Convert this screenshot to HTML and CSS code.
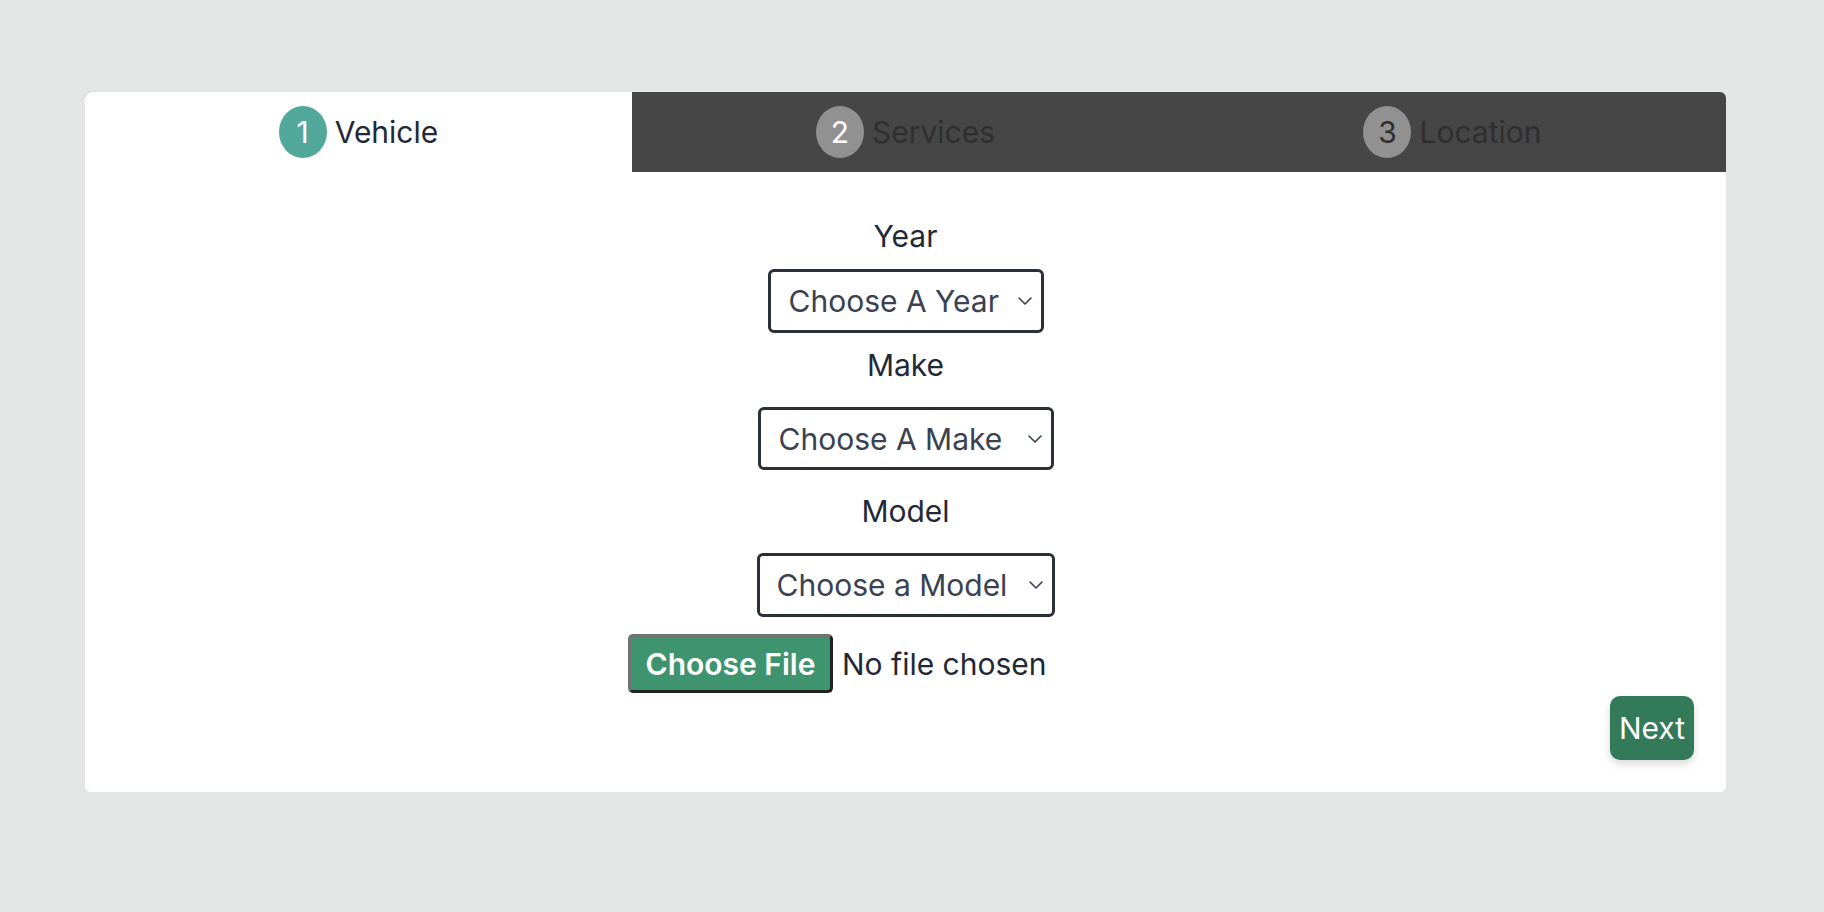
FILE: index.html
```html
<!DOCTYPE html>
<html lang="en">
<head>
<meta charset="utf-8">
<title>Vehicle</title>
<link rel="stylesheet" href="styles.css">
</head>
<body>
<div class="card">
  <div class="tabs">
    <div class="tab tab-active"><span class="badge badge-active">1</span><span class="tab-label">Vehicle</span></div>
    <div class="tab"><span class="badge badge-white">2</span><span class="tab-label">Services</span></div>
    <div class="tab tab-last"><span class="badge">3</span><span class="tab-label">Location</span></div>
  </div>
  <div class="form">
    <div class="label label-year">Year</div>
    <div class="select select-year"><span>Choose A Year</span><svg class="chev" width="14" height="8" viewBox="0 0 14 8"><path d="M1 1l6 6 6-6" fill="none" stroke="#3a4150" stroke-width="1.6" stroke-linecap="round" stroke-linejoin="round"/></svg></div>
    <div class="label label-make">Make</div>
    <div class="select select-make"><span>Choose A Make</span><svg class="chev" width="14" height="8" viewBox="0 0 14 8"><path d="M1 1l6 6 6-6" fill="none" stroke="#3a4150" stroke-width="1.6" stroke-linecap="round" stroke-linejoin="round"/></svg></div>
    <div class="label label-model">Model</div>
    <div class="select select-model"><span>Choose a Model</span><svg class="chev" width="14" height="8" viewBox="0 0 14 8"><path d="M1 1l6 6 6-6" fill="none" stroke="#3a4150" stroke-width="1.6" stroke-linecap="round" stroke-linejoin="round"/></svg></div>
    <div class="file-row"><span class="file-btn">Choose File</span><span class="file-text">No file chosen</span></div>
  </div>
  <div class="actions"><span class="next">Next</span></div>
</div>
</body>
</html>
```
FILE: styles.css
```css
html, body {
  margin: 0;
  padding: 0;
  background: #e4e6e5;
  font-family: Inter, "Open Sans", "Liberation Sans", sans-serif;
}
.card {
  margin: 92px 0 0 85px;
  width: 1641px;
  background: #ffffff;
  border-radius: 6px;
  overflow: hidden;
}
.tabs {
  display: grid;
  grid-template-columns: repeat(3, 1fr);
  height: 80px;
  background: #464646;
}
.tab {
  display: flex;
  align-items: center;
  justify-content: center;
  gap: 8px;
  color: #2f2f2f;
  font-size: 30px;
  line-height: 36px;
}
.tab-active {
  background: #ffffff;
  color: #1f2937;
}
.badge {
  width: 48px;
  height: 52px;
  border-radius: 50%;
  background: #919191;
  color: #2f2f2f;
  display: flex;
  align-items: center;
  justify-content: center;
}
.badge-active {
  background: #52a89b;
  color: #ffffff;
}
.badge-white {
  color: #ffffff;
}
.form {
  display: flex;
  flex-direction: column;
  align-items: center;
  padding-top: 46px;
}
.label {
  font-size: 30px;
  line-height: 36px;
  color: #1f2937;
}
.label-year { margin-bottom: 15px; }
.label-make { margin-bottom: 24px; }
.label-model { margin-bottom: 24px; }
.select {
  box-sizing: border-box;
  display: flex;
  align-items: center;
  justify-content: space-between;
  border: 3px solid #2b2f38;
  border-radius: 6px;
  padding: 0 9px 0 18px;
  font-size: 30px;
  color: #3a4150;
  background: #ffffff;
}
.select-year { width: 276px; height: 64px; margin-bottom: 14px; }
.select-make { width: 296px; height: 63px; margin-bottom: 23px; }
.select-model { width: 298px; height: 64px; margin-bottom: 17px; padding-left: 17px; }
.chev { flex: none; }
.file-row {
  width: 555px;
  display: flex;
  align-items: center;
  gap: 9px;
  font-size: 30px;
}
.file-btn {
  box-sizing: border-box;
  height: 59px;
  width: 205px;
  display: flex;
  align-items: center;
  justify-content: center;
  background: #3f9470;
  color: #ffffff;
  font-weight: 600;
  border: 3px solid;
  border-color: #727272 #222222 #222222 #727272;
  border-radius: 5px;
}
.file-text {
  color: #1f2937;
}
.actions {
  display: flex;
  justify-content: flex-end;
  padding: 3px 32px 32px 0;
}
.next {
  box-sizing: border-box;
  height: 64px;
  width: 84px;
  display: flex;
  align-items: center;
  justify-content: center;
  background: #337a5a;
  color: #ffffff;
  font-size: 30px;
  border-radius: 10px;
  box-shadow: 0 4px 8px rgba(0, 0, 0, 0.15);
}
```
